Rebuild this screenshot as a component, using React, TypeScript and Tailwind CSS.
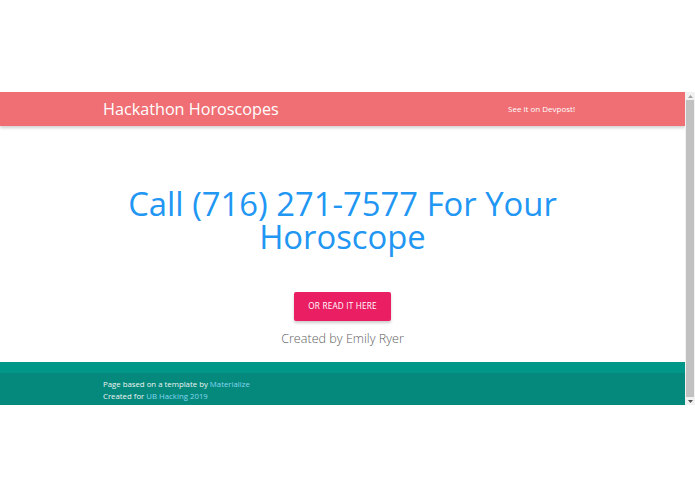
import React from "react";

const font = { fontFamily: '"Open Sans", "Noto Sans", sans-serif' };

function ScrollBar() {
  return (
    <div className="w-[10px] h-full bg-[#f1f1f1] flex flex-col items-center">
      <div className="h-[8px] w-full flex items-center justify-center">
        <svg width="5" height="3" viewBox="0 0 5 3"><path d="M0 3 L2.5 0 L5 3 Z" fill="#a3a3a3" /></svg>
      </div>
      <div className="flex-1 w-[8px] bg-[#c1c1c1]" />
      <div className="h-[8px] w-full flex items-center justify-center">
        <svg width="5" height="3" viewBox="0 0 5 3"><path d="M0 0 L5 0 L2.5 3 Z" fill="#505050" /></svg>
      </div>
    </div>
  );
}

export default function App() {
  return (
    <div className="w-[695px] h-[494px] bg-white" style={font}>
      <div className="h-[92px]" />
      <div className="h-[313px] flex">
        <div className="flex-1 flex flex-col overflow-hidden">
          <nav className="h-[34px] bg-[#ef6f74] shadow-[0_2px_3px_rgba(0,0,0,0.18)] relative z-10 flex items-center pl-[103px] pr-[110px]">
            <span className="text-white text-[16.2px] leading-none">Hackathon Horoscopes</span>
            <span className="ml-auto text-white text-[8px] leading-none">See it on Devpost!</span>
          </nav>
          <main className="flex-1 flex flex-col items-center pt-[61px]">
            <h1 className="text-[#2196f3] text-[32.8px] leading-[33px] text-center w-[460px] font-normal">
              Call (716) 271-7577 For Your Horoscope
            </h1>
            <button className="mt-[39px] w-[97px] h-[29px] bg-[#e91e63] text-white text-[8.2px] tracking-[0.2px] rounded-[2px] shadow-[0_2px_3px_rgba(0,0,0,0.2)]">
              OR READ IT HERE
            </button>
            <p className="mt-[12px] text-[#5f5f5f] text-[12.6px] font-light leading-none">Created by Emily Ryer</p>
          </main>
          <footer className="h-[43px] flex flex-col">
            <div className="h-[11px] bg-[#009688]" />
            <div className="flex-1 bg-[#04897c] pl-[103px] pt-[5px] text-[7.8px] leading-[12px] text-[#f1f5f4]">
              <div>
                Page based on a template by <span className="text-[#86d6f2]">Materialize</span>
              </div>
              <div>
                Created for <span className="text-[#86d6f2]">UB Hacking 2019</span>
              </div>
            </div>
          </footer>
        </div>
        <ScrollBar />
      </div>
    </div>
  );
}
